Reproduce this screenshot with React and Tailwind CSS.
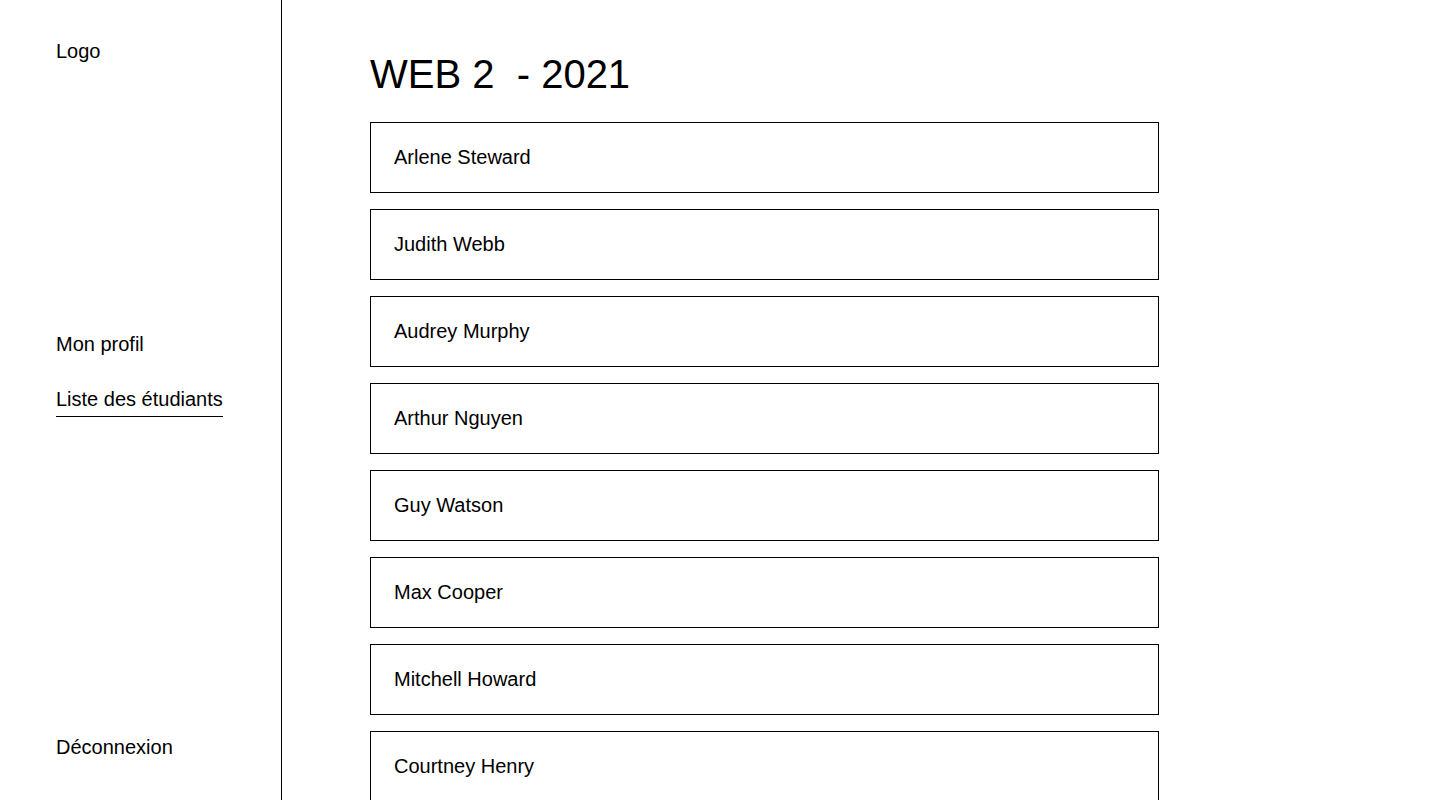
export default function App() {
  const students = [
    "Arlene Steward",
    "Judith Webb",
    "Audrey Murphy",
    "Arthur Nguyen",
    "Guy Watson",
    "Max Cooper",
    "Mitchell Howard",
    "Courtney Henry",
  ];
  return (
    <div
      className="flex h-screen w-full overflow-hidden bg-white text-black"
      style={{ fontFamily: '"Liberation Sans", Arial, sans-serif' }}
    >
      <aside className="flex w-[282px] shrink-0 flex-col border-r border-black pl-[56px] pt-[40px] pb-[41px] text-[20px] leading-[23px]">
        <div>Logo</div>
        <nav className="mt-[270px] flex flex-col items-start gap-[32px]">
          <a className="cursor-pointer">Mon profil</a>
          <a className="cursor-pointer border-b border-black pb-[5px]">Liste des étudiants</a>
        </nav>
        <div className="mt-auto">Déconnexion</div>
      </aside>
      <main className="flex-1 overflow-hidden pl-[88px] pt-[51px]">
        <h1 className="mb-[25px] whitespace-pre text-[40px] leading-[46px]">{"WEB 2  - 2021"}</h1>
        <ul className="flex w-[789px] flex-col gap-4">
          {students.map((s) => (
            <li
              key={s}
              className="flex h-[71px] shrink-0 items-center border border-black pl-[23px] pr-6 text-[20px] leading-[23px]"
            >
              {s}
            </li>
          ))}
        </ul>
      </main>
    </div>
  );
}
